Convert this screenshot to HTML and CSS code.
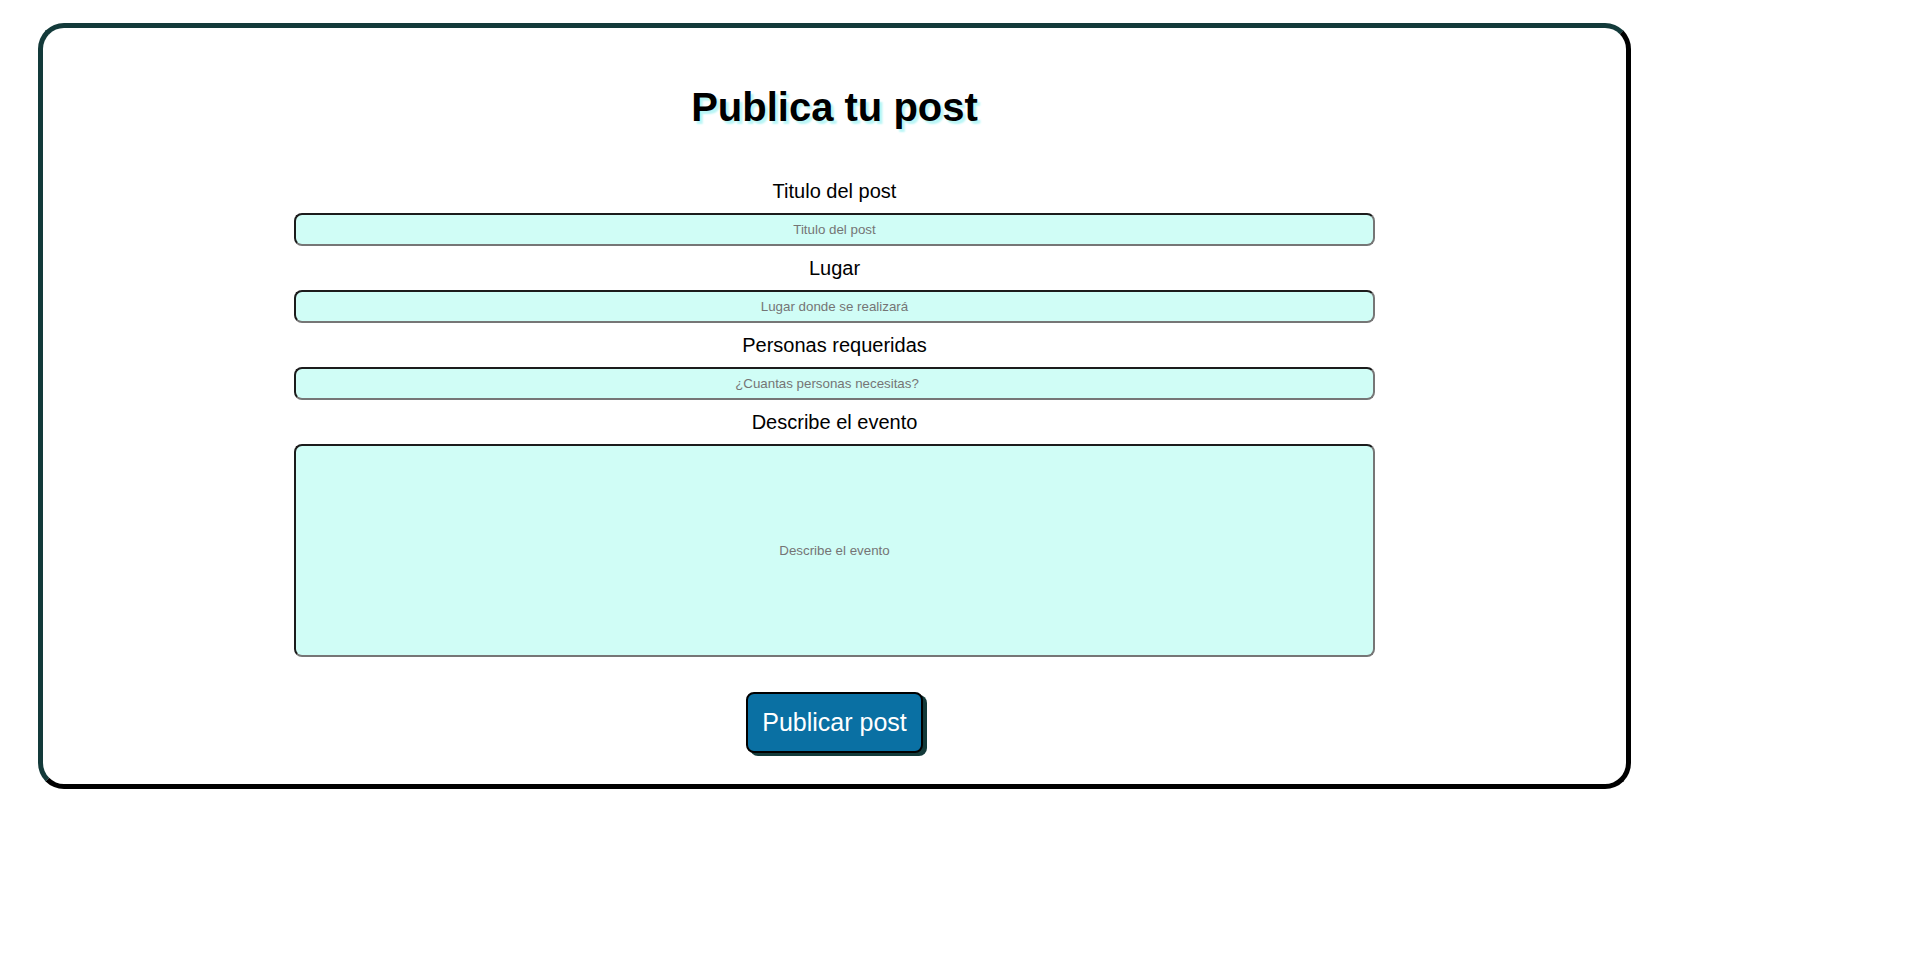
FILE: index.html
```html
<!DOCTYPE html>
<html lang="es">
<head>
<meta charset="utf-8">
<title>Publica tu post</title>
<link rel="stylesheet" href="styles.css">
</head>
<body>
<main class="card">
  <h1 class="title">Publica tu post</h1>
  <form class="post-form">
    <label class="field-label" for="titulo">Titulo del post</label>
    <input class="field-input" id="titulo" type="text" placeholder="Titulo del post">
    <label class="field-label" for="lugar">Lugar</label>
    <input class="field-input" id="lugar" type="text" placeholder="Lugar donde se realizará">
    <label class="field-label" for="personas">Personas requeridas</label>
    <input class="field-input" id="personas" type="number" placeholder="¿Cuantas personas necesitas?">
    <label class="field-label" for="desc">Describe el evento</label>
    <textarea class="field-area" id="desc" placeholder="Describe el evento"></textarea>
    <button class="submit-btn" type="button">Publicar post</button>
  </form>
</main>
</body>
</html>
```
FILE: styles.css
```css
html, body {
  background: #ffffff;
}
body {
  margin: 8px;
  font-family: "Liberation Sans", Arial, sans-serif;
  color: #000;
}
.card {
  box-sizing: border-box;
  width: 1593px;
  margin: 15px 0 0 30px;
  border: 5px solid;
  border-color: #133a3a #000 #000 #133a3a;
  border-radius: 26px;
  padding: 56px 0 31px;
  background: #fff;
}
.title {
  margin: 0;
  text-align: center;
  font-size: 40px;
  line-height: 46px;
  font-weight: bold;
  text-shadow: 3px 3px 2px #b9f6f6;
}
.post-form {
  width: 1081px;
  margin: 49px auto 0;
  display: flex;
  flex-direction: column;
  align-items: center;
}
.field-label {
  display: block;
  font-size: 20px;
  line-height: 24px;
  text-align: center;
}
.field-input,
.field-area {
  box-sizing: border-box;
  width: 100%;
  margin: 10px 0;
  border: 2px solid;
  border-color: #1c1c1c #767676 #767676 #1c1c1c;
  border-radius: 8px;
  background: #d0fdf6;
  font-family: "Liberation Sans", Arial, sans-serif;
  font-size: 13.33px;
  text-align: center;
  color: #000;
  outline: none;
}
.field-input {
  height: 33px;
  padding: 0 10px;
}
.field-area {
  height: 213px;
  padding: 97px 10px 0;
  resize: none;
  line-height: 15px;
}
.field-input::placeholder,
.field-area::placeholder {
  color: #757575;
}
.submit-btn {
  margin-top: 25px;
  padding: 14px 14px;
  background: #0a70a3;
  color: #fff;
  border: 2px solid #000;
  border-radius: 8px;
  box-shadow: 4px 3px 0 #133a3a;
  font-family: "Liberation Sans", Arial, sans-serif;
  font-size: 25px;
  line-height: 29px;
}
```
